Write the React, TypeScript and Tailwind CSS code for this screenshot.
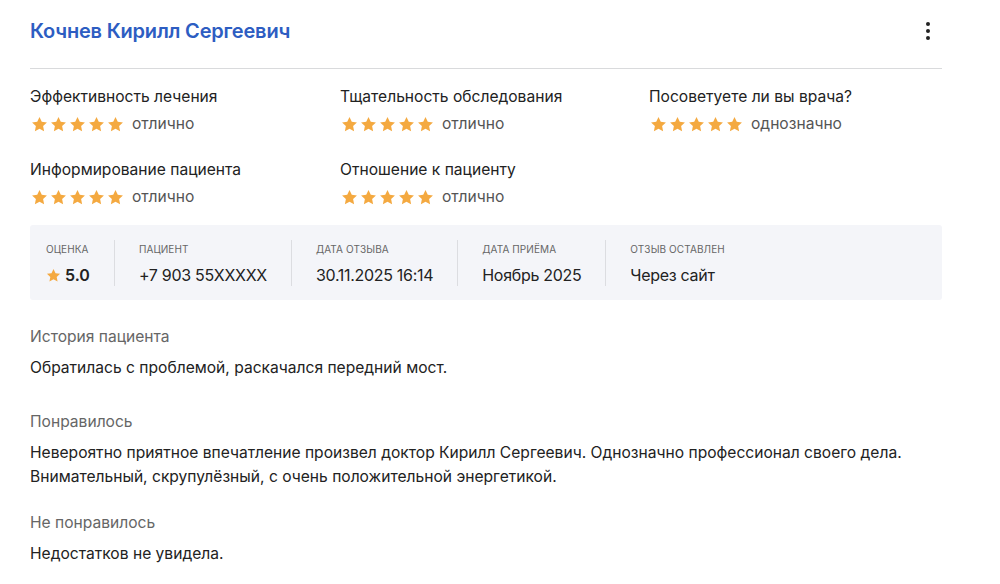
import React from "react";

const ratings = [
  { label: "Эффективность лечения", value: "отлично" },
  { label: "Тщательность обследования", value: "отлично" },
  { label: "Посоветуете ли вы врача?", value: "однозначно" },
  { label: "Информирование пациента", value: "отлично" },
  { label: "Отношение к пациенту", value: "отлично" },
];

function Star({ className = "" }: { className?: string }) {
  return (
    <svg viewBox="0 0 24 24" className={className} fill="#f4a940">
      <path d="M12 1.5l3.2 6.7 7.3.9-5.4 5.1 1.4 7.3L12 17.9l-6.5 3.6 1.4-7.3-5.4-5.1 7.3-.9z" />
    </svg>
  );
}

function Stars() {
  return (
    <div className="flex gap-[2px]">
      {[0, 1, 2, 3, 4].map((i) => (
        <Star key={i} className="w-[17px] h-[17px]" />
      ))}
    </div>
  );
}

const meta = [
  { label: "Пациент", value: "+7 903 55XXXXX" },
  { label: "Дата отзыва", value: "30.11.2025 16:14" },
  { label: "Дата приёма", value: "Ноябрь 2025" },
  { label: "Отзыв оставлен", value: "Через сайт" },
];

export default function App() {
  return (
    <div
      className="bg-white min-h-[584px] px-[30px] pt-[17px] text-[#222]"
      style={{ fontFamily: "Inter, 'Noto Sans', sans-serif" }}
    >
      <div className="w-[912px]">
        <div className="flex items-center justify-between h-[28px]">
          <h1 className="text-[20px] font-semibold text-[#2d5dc2] tracking-[-0.2px]">
            Кочнев Кирилл Сергеевич
          </h1>
          <button className="w-[20px] h-[24px] mr-[4px] flex flex-col items-center justify-center gap-[3px]">
            <span className="w-[4px] h-[4px] rounded-full bg-[#222]" />
            <span className="w-[4px] h-[4px] rounded-full bg-[#222]" />
            <span className="w-[4px] h-[4px] rounded-full bg-[#222]" />
          </button>
        </div>
        <div className="h-px bg-[#d9dadc] mt-[23px]" />

        <div className="grid grid-cols-[310px_309px_1fr] gap-y-[24px] mt-[17px]">
          {ratings.map((r) => (
            <div key={r.label}>
              <div className="text-[15.6px] leading-[22px] text-[#222]">{r.label}</div>
              <div className="flex items-center gap-[8px] mt-[5px] h-[22px]">
                <div className="pl-[1px]">
                  <Stars />
                </div>
                <span className="text-[15.6px] text-[#555]">{r.value}</span>
              </div>
            </div>
          ))}
        </div>

        <div className="mt-[17px] bg-[#f4f5f9] rounded-[3px] h-[75px] flex items-center px-[16px] pt-[4px] gap-[24px]">
          <div>
            <div className="text-[10px] uppercase text-[#666] tracking-[0.1px]">Оценка</div>
            <div className="flex items-center gap-[4px] mt-[6px]">
              <Star className="w-[15px] h-[15px]" />
              <span className="text-[16px] font-semibold text-[#222]">5.0</span>
            </div>
          </div>
          {meta.map((m) => (
            <React.Fragment key={m.label}>
              <div className="w-px h-[46px] bg-[#dcdde1] -mt-[4px]" />
              <div>
                <div className="text-[10px] uppercase text-[#666] tracking-[0.1px]">{m.label}</div>
                <div className="text-[16px] text-[#222] mt-[6px] tracking-[-0.3px]">{m.value}</div>
              </div>
            </React.Fragment>
          ))}
        </div>

        <div className="mt-[25px] text-[15.6px]">
          <div className="text-[#666] leading-[24px]">История пациента</div>
          <div className="mt-[7px] leading-[24px]">
            Обратилась с проблемой, раскачался передний мост.
          </div>

          <div className="text-[#666] leading-[24px] mt-[30px]">Понравилось</div>
          <div className="mt-[7px] leading-[24px]">
            Невероятно приятное впечатление произвел доктор Кирилл Сергеевич. Однозначно профессионал своего дела.
            <br />
            Внимательный, скрупулёзный, с очень положительной энергетикой.
          </div>

          <div className="text-[#666] leading-[24px] mt-[22px]">Не понравилось</div>
          <div className="mt-[7px] leading-[24px]">Недостатков не увидела.</div>
        </div>
      </div>
    </div>
  );
}
